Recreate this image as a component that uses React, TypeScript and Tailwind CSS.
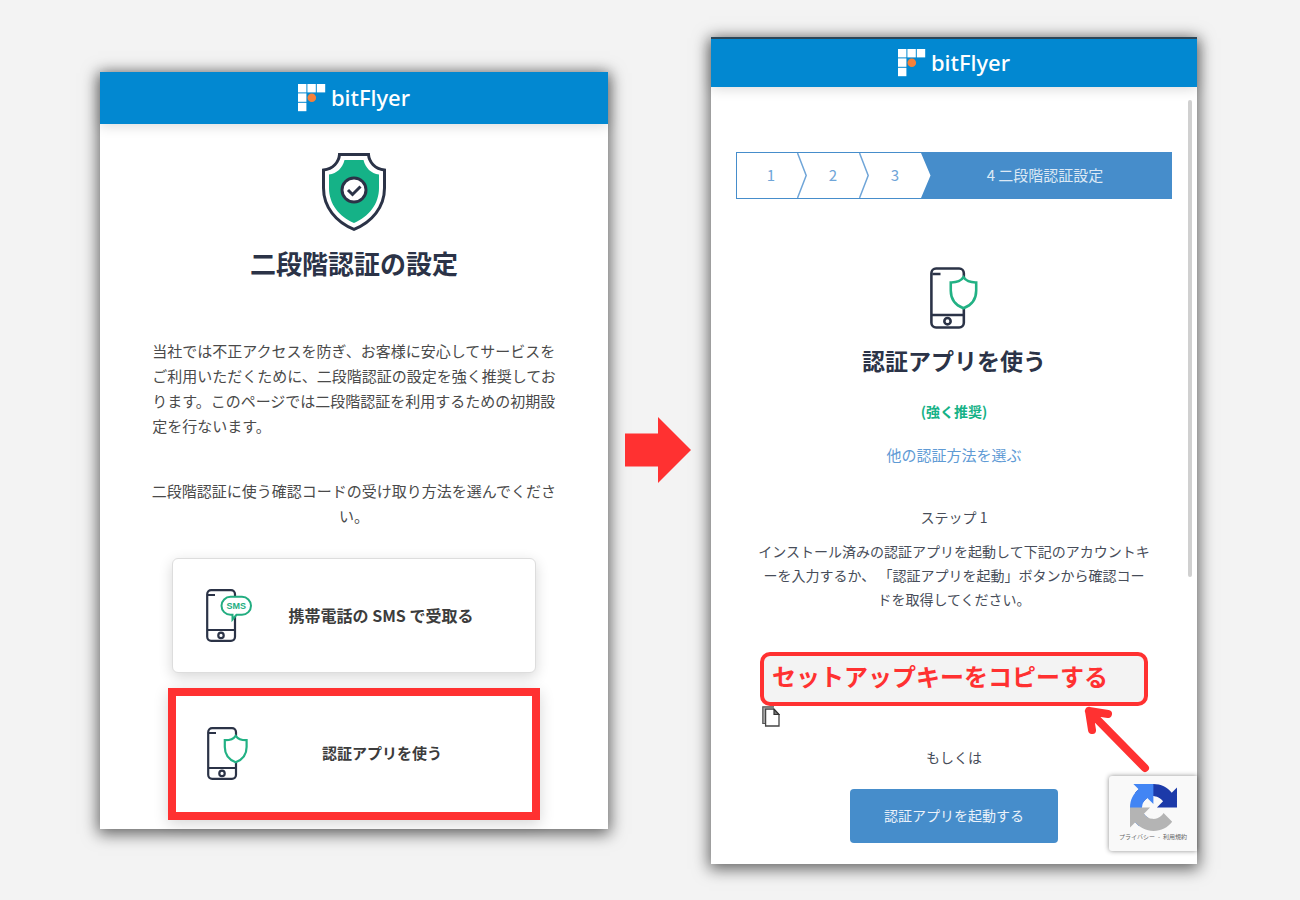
import type { ReactNode } from "react";

const steps = ["1", "2", "3"];

function Logo() {
  return (
    <a href="#" className="flex items-center gap-[5px] text-white">
      <svg width="28" height="28" viewBox="0 0 28 28" aria-hidden="true">
        <g fill="#fff">
          <rect x="0" y="0" width="8.4" height="8.4" />
          <rect x="9.4" y="0" width="8.4" height="8.4" />
          <rect x="18.8" y="0" width="8.4" height="8.4" />
          <rect x="0" y="9.4" width="8.4" height="8.4" />
          <rect x="0" y="18.8" width="8.4" height="8.4" />
        </g>
        <circle cx="13.8" cy="13.8" r="4.3" fill="#f5813a" />
      </svg>
      <span className="pb-0.5 font-['Noto_Sans',sans-serif] text-[22px] leading-7 font-medium">bitFlyer</span>
    </a>
  );
}

function BigShield() {
  return (
    <svg width="64" height="78" viewBox="0 0 64 78" aria-hidden="true">
      <path
        d="M17.5 1.5H46.5C47 9 53 16 62.5 17V35C62.5 54 50 69 32 76.3C14 69 1.5 54 1.5 35V17C11 16 17 9 17.5 1.5Z"
        fill="#fff"
        stroke="#2b3347"
        strokeWidth="3"
      />
      <path
        d="M22.5 7H41.5C43.5 15 49 20.5 57 21.5V35C57 51 47 63.5 32 70C17 63.5 7 51 7 35V21.5C15 20.5 20.5 15 22.5 7Z"
        fill="#15b287"
      />
      <circle cx="32" cy="37" r="12" fill="#fff" stroke="#2b3347" strokeWidth="3" />
      <path d="M26 37L30.5 41.5L38.5 33.5" fill="none" stroke="#2b3347" strokeWidth="3" />
    </svg>
  );
}

function PhoneBody() {
  return (
    <g fill="none" stroke="#2b3347" strokeWidth="2.2">
      <rect x="1.2" y="1.2" width="27.8" height="50.6" rx="4" />
      <path d="M1 41H29M2 6H9" />
      <circle cx="15" cy="46.4" r="2.7" />
    </g>
  );
}

function PhoneSms() {
  return (
    <svg width="46" height="53" viewBox="0 0 46 53" aria-hidden="true">
      <PhoneBody />
      <path
        d="M24.5 7.8H36A9 9 0 0 1 36 25.8H30.5L26.5 30.5V25.8H24.5A9 9 0 0 1 24.5 7.8Z"
        fill="#fff"
        stroke="#22ad80"
        strokeWidth="2"
      />
      <text x="30.3" y="20" textAnchor="middle" fill="#22ad80" className="font-['Liberation_Sans',sans-serif] text-[9px] font-bold">
        SMS
      </text>
    </svg>
  );
}

function PhoneShield({ className }: { className: string }) {
  return (
    <svg className={className} viewBox="0 0 42 53" aria-hidden="true">
      <PhoneBody />
      <path
        d="M28.7 8.8C26.5 12 22.5 13.3 17.8 13.2V20C17.8 27 21.5 32.5 28.7 35.3C36 32.5 39.6 27 39.6 20V13.2C35 13.3 31 12 28.7 8.8Z"
        fill="#fff"
        stroke="#22b184"
        strokeWidth="2.2"
      />
    </svg>
  );
}

function CopyIcon() {
  return (
    <svg width="18" height="21" viewBox="0 0 18 21" fill="none" aria-hidden="true">
      <path d="M12 .8H.8V17.5H4" fill="#aaa" stroke="#555" strokeWidth="1.2" />
      <path d="M3.6 3.2H12L17 8.5V20H3.6Z" fill="#fff" stroke="#444" strokeWidth="1.3" />
      <path d="M12 3.2V8.5H17Z" fill="#777" stroke="#333" strokeWidth="1.2" />
    </svg>
  );
}

function RecaptchaIcon() {
  return (
    <svg width="47" height="47" viewBox="0 0 64 64" aria-hidden="true">
      <path
        fill="#1c3aa9"
        d="M64 31.955l-.033-1.37V4.687l-7.16 7.16C50.948 4.674 42.033.093 32.05.093c-10.4 0-19.622 4.96-25.458 12.64l11.736 11.86a15.55 15.55 0 0 1 4.754-5.334c2.05-1.6 4.952-2.906 8.968-2.906.485 0 .86.057 1.135.163 4.976.393 9.288 3.14 11.828 7.124l-8.307 8.307L64 31.953"
      />
      <path
        fill="#4285f4"
        d="M31.862.094l-1.37.033H4.594l7.16 7.16C4.58 13.147 0 22.06 0 32.046c0 10.4 4.96 19.622 12.64 25.458L24.5 45.768a15.55 15.55 0 0 1-5.334-4.754c-1.6-2.05-2.906-4.952-2.906-8.968 0-.485.057-.86.163-1.135.393-4.976 3.14-9.288 7.124-11.828l8.307 8.307L31.86.095"
      />
      <path
        fill="#b4b4b4"
        d="M.001 32.045l.033 1.37v25.898l7.16-7.16c5.86 7.173 14.774 11.754 24.76 11.754 10.4 0 19.622-4.96 25.458-12.64l-11.736-11.86a15.55 15.55 0 0 1-4.754 5.334c-2.05 1.6-4.952 2.906-8.968 2.906-.485 0-.86-.057-1.135-.163-4.976-.393-9.288-3.14-11.828-7.124l8.307-8.307c-10.522.04-22.4.066-27.295-.005"
      />
    </svg>
  );
}

function Option({ icon, children, className }: { icon: ReactNode; children: ReactNode; className: string }) {
  return (
    <button type="button" className={`flex items-center bg-white font-bold text-[#3c3c3c] ${className}`}>
      <span className="w-[46px] shrink-0">{icon}</span>
      <span className="flex-1 text-center">{children}</span>
    </button>
  );
}

function MethodPanel() {
  return (
    <section className="bg-white shadow-[0_3px_15px_2px_rgba(0,0,0,0.6)]">
      <header className="flex h-[52px] items-center justify-center bg-[#0288d1] shadow-[0_2px_12px_rgba(0,0,0,0.15)]">
        <Logo />
      </header>
      <div className="flex flex-col items-center pt-[29px] pb-[9px]">
        <BigShield />
        <h1 className="mt-3.5 text-[26px] leading-9 font-bold text-[#2b3347]">二段階認証の設定</h1>
        <p className="mt-[57px] text-[15px] leading-[25px] whitespace-nowrap">
          当社では不正アクセスを防ぎ、お客様に安心してサービスを
          <br />
          ご利用いただくために、二段階認証の設定を強く推奨してお
          <br />
          ります。このページでは二段階認証を利用するための初期設
          <br />
          定を行ないます。
        </p>
        <p className="mt-10 text-center text-[15px] leading-[25px] whitespace-nowrap">
          二段階認証に使う確認コードの受け取り方法を選んでくださ
          <br />
          い。
        </p>
        <Option
          icon={<PhoneSms />}
          className="mt-[30px] h-[115px] w-[364px] rounded-md border border-[#ddd] pr-[25px] pl-[33px] text-base shadow-[0_4px_14px_rgba(0,0,0,0.16)]"
        >
          携帯電話の SMS で受取る
        </Option>
        <Option
          icon={<PhoneShield className="h-[53px] w-[42px]" />}
          className="mt-[15px] h-[132px] w-[372px] border-8 border-[#ff3131] pr-[21px] pl-[31px] text-[15px] shadow-[0_4px_14px_rgba(0,0,0,0.16)]"
        >
          認証アプリを使う
        </Option>
      </div>
    </section>
  );
}

function StepBar() {
  return (
    <ol className="flex h-[47px] border border-[#468dcb] text-[15px] text-[#6fa5d8]">
      {steps.map((step, i) => (
        <li key={step} className={`flex items-center ${i === 0 ? "w-[70px] pl-2" : "w-[62px]"}`}>
          <span className="flex-1 text-center">{step}</span>
          {/* divider; the last one is the cut edge of the active step */}
          <svg className="h-full w-[10px]" viewBox="0 0 10 45" preserveAspectRatio="none" aria-hidden="true">
            {i === 2 && <path d="M0 0L9.5 22.5L0 45H10V0Z" fill="#468dcb" />}
            {i < 2 && <path d="M.5 0L9.2 22.5L.5 45" fill="none" stroke="#6fa5d8" strokeWidth="1.5" />}
          </svg>
        </li>
      ))}
      <li aria-current="step" className="flex flex-1 items-center justify-center bg-[#468dcb] pr-3 text-[#dce9f5]">
        4 二段階認証設定
      </li>
    </ol>
  );
}

function AppPanel() {
  return (
    <section className="relative border-t-2 border-[#2f4a5c] bg-white text-sm text-[#474d59] shadow-[0_3px_15px_2px_rgba(0,0,0,0.6)]">
      <header className="flex h-12 items-center justify-center bg-[#0288d1] shadow-[0_2px_12px_rgba(0,0,0,0.15)]">
        <Logo />
      </header>
      <div className="px-[25px] pt-[65px] pb-[21px]">
        <StepBar />
        <div className="mt-[68px] flex flex-col items-center">
          <PhoneShield className="h-[62px] w-[49px]" />
          <h2 className="mt-[15px] text-[23px] leading-8 font-bold text-[#2b3347]">認証アプリを使う</h2>
          <p className="mt-[23px] leading-6 font-bold text-[#15b287]">(強く推奨)</p>
          <a href="#" className="mt-5 text-[15px] leading-6 text-[#5f9bd5]">
            他の認証方法を選ぶ
          </a>
          <h3 className="mt-[38px] leading-6">ステップ 1</h3>
          <p className="mt-2.5 text-center leading-6 whitespace-nowrap">
            インストール済みの認証アプリを起動して下記のアカウントキ
            <br />
            ーを入力するか、 「認証アプリを起動」ボタンから確認コー
            <br />
            ドを取得してください。
          </p>
          <div className="mt-[41px] w-full max-w-[388px]">
            <div className="relative">
              <p className="flex h-[54px] items-center rounded-[10px] border-4 border-[#ff3131] bg-[#f3f3f3] px-2 pb-1.5 text-2xl font-bold whitespace-nowrap text-[#ff3131]">
                セットアップキーをコピーする
              </p>
              <svg
                className="absolute top-full -right-1"
                width="68"
                height="68"
                viewBox="0 0 68 68"
                fill="none"
                stroke="#ff3131"
                strokeWidth="8"
                strokeLinecap="round"
                strokeLinejoin="round"
                aria-hidden="true"
              >
                <path d="M61 62L5 5M24 8L5 5L8 24" />
              </svg>
            </div>
            <button type="button" aria-label="コピー" className="block h-5 pl-0.5">
              <CopyIcon />
            </button>
          </div>
          <p className="mt-[19px] leading-6">もしくは</p>
          <button type="button" className="mt-5 h-[54px] w-[208px] rounded-[4px] bg-[#468dcb] pb-0.5 text-[#eaf2fa]">
            認証アプリを起動する
          </button>
        </div>
      </div>
      <div className="absolute top-[61px] right-[5px] h-[477px] w-1 rounded-full bg-[#d0d0d0]" />
      <aside className="absolute right-0 bottom-[13px] flex h-[75px] w-[88px] flex-col items-center rounded-l-[3px] bg-[#f9f9f9] pt-2 shadow-[0_0_5px_rgba(0,0,0,0.45)]">
        <RecaptchaIcon />
        <p className="mt-0.5 flex gap-[3px] text-[6px] leading-2 whitespace-nowrap text-[#666]">
          <a href="#">プライバシー</a>
          <span>-</span>
          <a href="#">利用規約</a>
        </p>
      </aside>
    </section>
  );
}

export default function App() {
  return (
    <main
      lang="ja"
      className="grid min-h-screen grid-cols-[508fr_103fr_486fr] items-center bg-[#f3f3f3] pr-[103px] pl-[100px] font-['Noto_Sans_CJK_JP',sans-serif] text-[#4a4a4a]"
    >
      <MethodPanel />
      <svg className="mr-auto ml-[17px]" width="66" height="66" viewBox="0 0 66 66" aria-hidden="true">
        <path d="M0 16.5H33V0L66 33L33 66V49.5H0Z" fill="#ff3131" />
      </svg>
      <AppPanel />
    </main>
  );
}
